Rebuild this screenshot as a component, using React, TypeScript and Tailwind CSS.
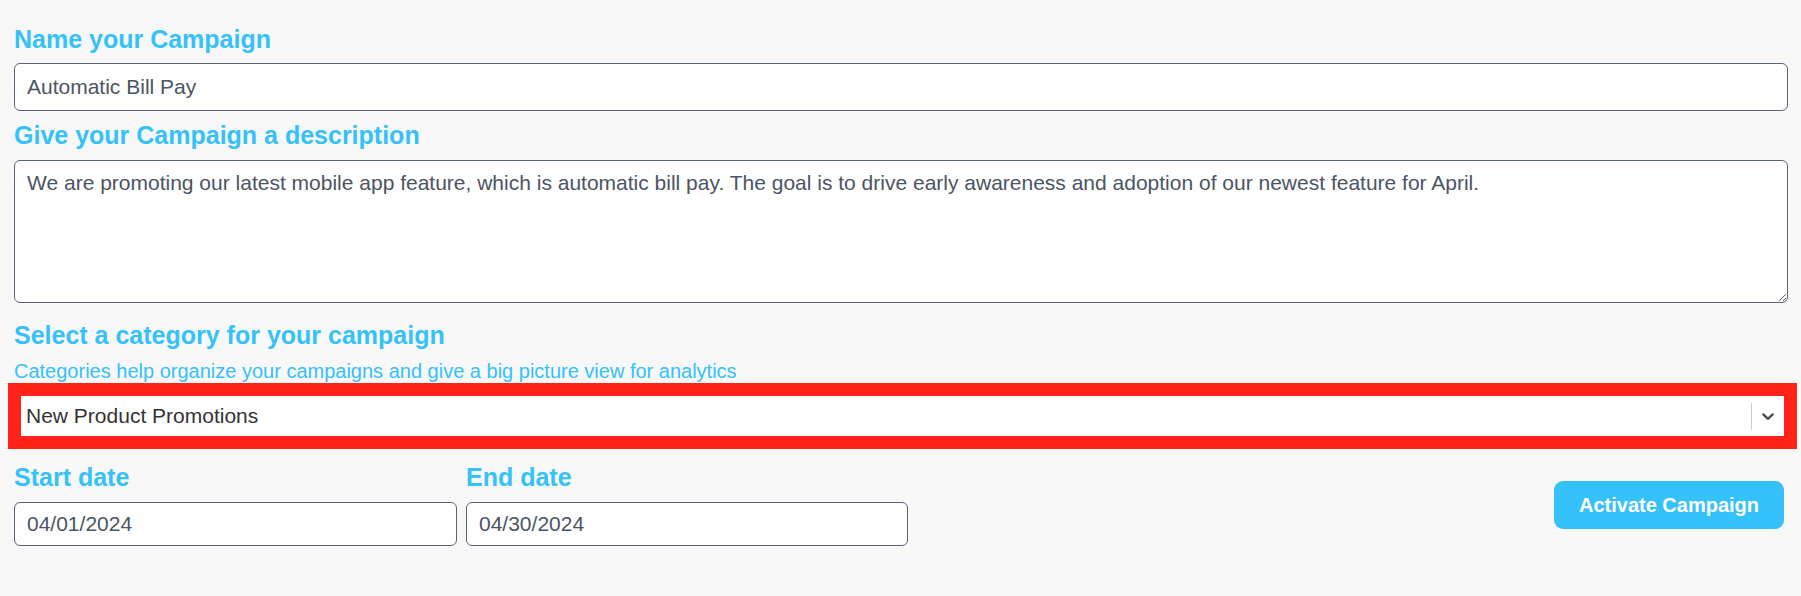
import React from "react";

const labelCls = "block text-[25px] leading-[28px] font-bold text-[#35c1f9]";
const fieldCls =
  "block w-full rounded-[6px] border border-[#5b6477] bg-white px-3 text-[21px] text-[#4b5563] outline-none";

const ChevronDown: React.FC = () => (
  <svg width="20" height="20" viewBox="0 0 20 20" fill="currentColor" aria-hidden="true">
    <path d="M4.516 7.548c0.436-0.446 1.043-0.481 1.576 0l3.908 3.747 3.908-3.747c0.533-0.481 1.141-0.446 1.574 0 0.436 0.445 0.408 1.197 0 1.615-0.406 0.418-4.695 4.502-4.695 4.502-0.217 0.223-0.502 0.335-0.787 0.335s-0.57-0.112-0.789-0.335c0 0-4.287-4.084-4.695-4.502s-0.436-1.17 0-1.615z" />
  </svg>
);

const App: React.FC = () => {
  return (
    <div className="min-h-screen bg-[#f8f8f8] pl-[14px] pr-[13px] pt-[25px] font-['Liberation_Sans',Arial,sans-serif]">
      <label className={labelCls}>Name your Campaign</label>
      <input className={`${fieldCls} mt-[10px] h-[48px]`} defaultValue="Automatic Bill Pay" />

      <label className={`${labelCls} mt-[10px]`}>Give your Campaign a description</label>
      <textarea
        className={`${fieldCls} mt-[11px] h-[143px] pt-[10px] leading-[24px]`}
        defaultValue="We are promoting our latest mobile app feature, which is automatic bill pay. The goal is to drive early awareness and adoption of our newest feature for April."
      />

      <label className={`${labelCls} mt-[18px]`}>Select a category for your campaign</label>
      <p className="mt-[11px] text-[20px] leading-[23px] text-[#35c1f9]">
        Categories help organize your campaigns and give a big picture view for analytics
      </p>

      {/* category select, highlighted */}
      <div className="-ml-[6px] -mr-[9px] border-[13px] border-[#ff2417]">
        <div className="flex h-[40px] items-center bg-white">
          <span className="flex-1 pl-[5px] text-[21px] text-[#333333]">New Product Promotions</span>
          <span className="h-[27px] w-px bg-[#cccccc]" />
          <span className="flex w-[32px] justify-center text-[#4d4d4d]">
            <ChevronDown />
          </span>
        </div>
      </div>

      <div className="mt-[14px] flex items-center">
        <div className="flex gap-[9px]">
          <div className="w-[443px]">
            <label className={labelCls}>Start date</label>
            <input className={`${fieldCls} mt-[11px] h-[44px]`} defaultValue="04/01/2024" />
          </div>
          <div className="w-[442px]">
            <label className={labelCls}>End date</label>
            <input className={`${fieldCls} mt-[11px] h-[44px]`} defaultValue="04/30/2024" />
          </div>
        </div>
        <button className="ml-auto mr-[4px] h-[48px] w-[230px] rounded-[9px] bg-[#35c1fa] text-[20px] font-bold text-white">
          Activate Campaign
        </button>
      </div>
    </div>
  );
};

export default App;
